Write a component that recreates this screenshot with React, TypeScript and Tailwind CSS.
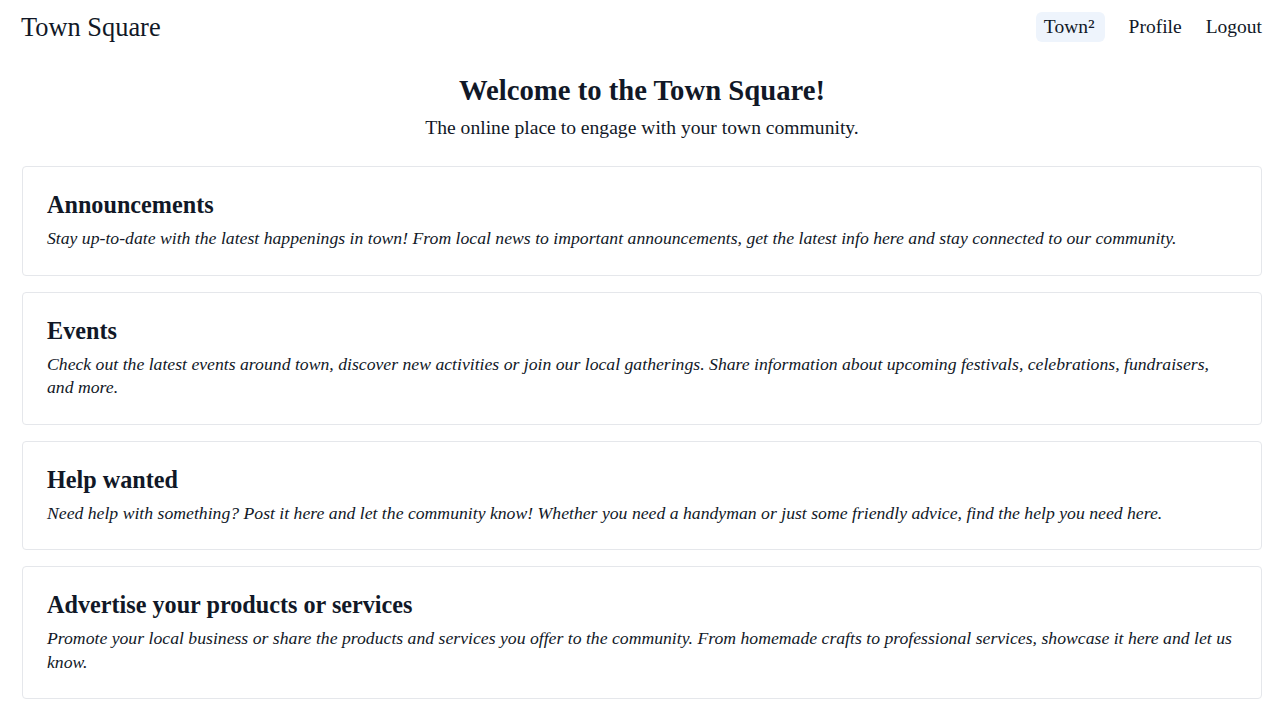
const sections = [
  {
    title: 'Announcements',
    text: 'Stay up-to-date with the latest happenings in town! From local news to important announcements, get the latest info here and stay connected to our community.',
  },
  {
    title: 'Events',
    text: 'Check out the latest events around town, discover new activities or join our local gatherings. Share information about upcoming festivals, celebrations, fundraisers, and more.',
  },
  {
    title: 'Help wanted',
    text: 'Need help with something? Post it here and let the community know! Whether you need a handyman or just some friendly advice, find the help you need here.',
  },
  {
    title: 'Advertise your products or services',
    text: 'Promote your local business or share the products and services you offer to the community. From homemade crafts to professional services, showcase it here and let us know.',
  },
];

export default function App() {
  return (
    <div className="min-h-screen bg-white text-[#111827] font-['Liberation_Serif',serif] pl-[22px] pr-[18px]">
      <header className="flex items-center justify-between h-[54px]">
        <a href="#" className="text-[26.4px] leading-none -ml-px">Town Square</a>
        <nav className="flex items-center gap-2 text-[19.5px] -mr-2">
          <a href="#" className="pl-2 pr-[10px] mr-2 h-[30px] flex items-center rounded-md bg-[#eef4fc]">
            Town<span className="text-[22px] leading-none">²</span>
          </a>
          <a href="#" className="px-2 h-[30px] flex items-center">Profile</a>
          <a href="#" className="px-2 h-[30px] flex items-center">Logout</a>
        </nav>
      </header>

      <div className="text-center mt-5">
        <h1 className="text-[28.7px] leading-8 font-bold">Welcome to the Town Square!</h1>
        <p className="text-[19.6px] leading-7 mt-2">The online place to engage with your town community.</p>
      </div>

      <main className="mt-6 flex flex-col gap-4">
        {sections.map((s) => (
          <section key={s.title} className="border border-gray-200 rounded p-6">
            <h2 className="text-[24.2px] leading-7 font-bold mb-2">{s.title}</h2>
            <p className="italic text-[17.7px] leading-[23.5px]">{s.text}</p>
          </section>
        ))}
      </main>
    </div>
  );
}
